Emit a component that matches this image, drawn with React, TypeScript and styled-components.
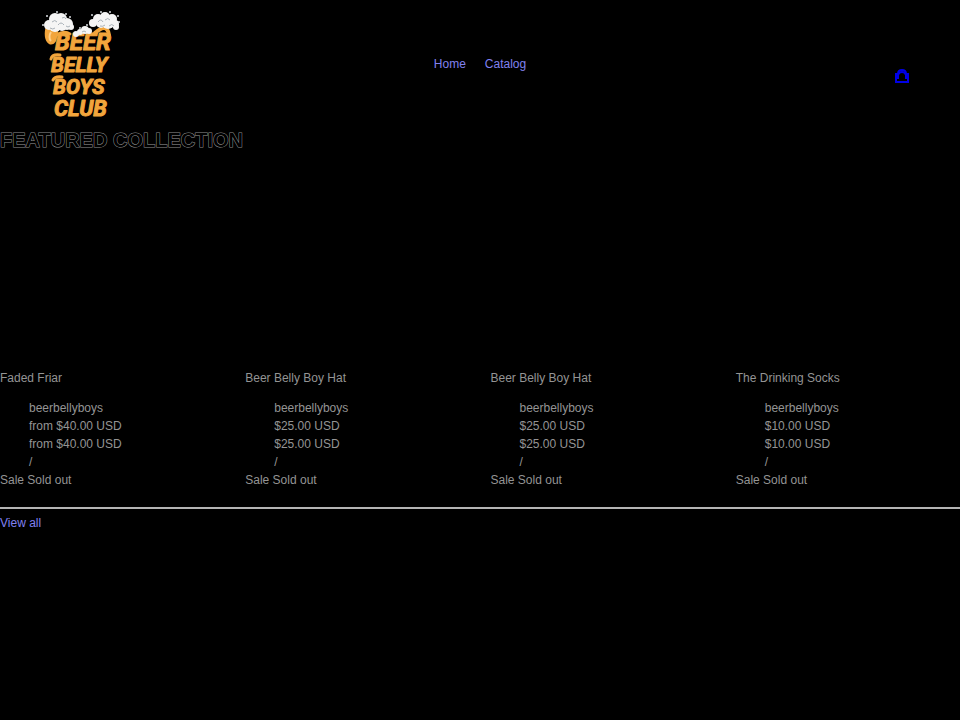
import React from "react";
import styled, { createGlobalStyle } from "styled-components";

const GlobalStyle = createGlobalStyle`
  *, *::before, *::after { box-sizing: border-box; }
  body {
    margin: 0;
    background: #000;
    color: #949494;
    font: 12px/18px "Liberation Sans", Arial, sans-serif;
  }
`;

const Header = styled.header`
  display: grid;
  grid-template-columns: 1fr auto 1fr;
  align-items: center;
  padding: 4px 48px 0 40px;
  height: 128px;
`;

const LogoLink = styled.a`
  display: block;
  width: 84px;
  svg { display: block; }
`;

const Nav = styled.nav`
  display: flex;
  gap: 19px;
  padding: 0 0 4px 8px;
`;

const TextLink = styled.a`
  color: #8080f0;
  text-decoration: none;
`;

const CartLink = styled.a`
  justify-self: end;
  display: block;
  padding-top: 20px;
  color: #0000e6;
  svg { display: block; }
`;

const Heading = styled.h2`
  margin: 0;
  font-size: 20px;
  line-height: 24px;
  font-weight: 700;
  color: #000;
  text-transform: uppercase;
  -webkit-text-stroke: 1px #909090;
  paint-order: stroke fill;
`;

const Products = styled.ul`
  display: grid;
  grid-template-columns: repeat(4, 1fr);
  column-gap: 21px;
  margin: 0;
  padding: 217px 0 0;
  list-style: none;
`;

const Title = styled.h3`
  margin: 0 0 12px;
  font-size: 12px;
  line-height: 18px;
  font-weight: 400;
`;

const Details = styled.div`
  padding-left: 29px;
`;

const Line = styled.p`
  margin: 0;
`;

const Divider = styled.hr`
  margin: 18px 0 5px;
  border: 0;
  height: 2px;
  background: #b4b4b4;
`;

const items = [
  { title: "Faded Friar", price: "from $40.00 USD" },
  { title: "Beer Belly Boy Hat", price: "$25.00 USD" },
  { title: "Beer Belly Boy Hat", price: "$25.00 USD" },
  { title: "The Drinking Socks", price: "$10.00 USD" },
];

const LogoText = styled.text`
  font-family: Roboto, "Liberation Sans", sans-serif;
  font-weight: 700;
  font-style: italic;
  fill: #f2a53c;
  stroke: #f2a53c;
  stroke-width: 1;
  stroke-linejoin: round;
`;

const foam: [number, number, number][] = [
  [9, 17, 5], [15, 11, 6], [21, 11, 6], [27, 16, 6], [15, 18, 6], [22, 18, 5], [31, 19, 3],
  [36, 26, 3], [40, 24, 3], [45, 22, 4], [49, 23, 3],
  [53, 15, 4], [58, 11, 5], [65, 9, 5], [72, 11, 5], [75, 16, 4], [68, 15, 6], [61, 15, 5], [76, 19, 3],
];
const bubbles: [number, number, number][] = [
  [3, 17, 1], [7, 8, 1], [17, 4, 1], [26, 6, 1], [30, 9, 1], [40, 20, 1], [47, 17, 1],
  [52, 7, 1], [61, 4, 1], [70, 4, 1], [78, 8, 1], [79, 14, 1],
];

function Logo() {
  return (
    <svg width="84" height="116" viewBox="0 0 84 116" role="img" aria-label="Beer Belly Boys Club">
      <path d="M6 18C4 24 4 33 9 36C13 38 17 34 17 29L19 20Z" fill="#f2a53c" />
      <path d="M11 24C9 27 9 31 11 33" fill="none" stroke="#ffd08a" strokeWidth="2" />
      <path d="M17 27Q24 22 30 26" fill="none" stroke="#f2a53c" strokeWidth="3" strokeLinecap="round" />
      <path d="M55 25Q67 14 69 27" fill="none" stroke="#f2a53c" strokeWidth="4" strokeLinecap="round" />
      <path d="M11 51Q12 46 20 47M13 72Q15 68 22 69" fill="none" stroke="#f2a53c" strokeWidth="3" strokeLinecap="round" />
      <LogoText x="15" y="42" fontSize="24">BEER</LogoText>
      <LogoText x="11" y="64" fontSize="21">BELLY</LogoText>
      <LogoText x="13" y="86" fontSize="21">BOYS</LogoText>
      <LogoText x="14" y="108" fontSize="22">CLUB</LogoText>
      {foam.map(([x, y, r]) => (
        <circle key={`${x}-${y}`} cx={x} cy={y} r={r} fill="#f5f5f5" />
      ))}
      {bubbles.map(([x, y, r]) => (
        <circle key={`${x}-${y}`} cx={x} cy={y} r={r} fill="#d9dde0" />
      ))}
      <path
        d="M12 14q3-3 5 0M18 17q3-4 6 0M22 10q3-2 4 1M10 20q3 2 5 0M26 18q2 2 4 0M58 14q3-4 5 0M65 12q3-3 5 0M69 18q3-3 5 0M60 18q3 1 5-1M42 24q2-2 4 0"
        fill="none"
        stroke="#a9b1b8"
        strokeWidth="1"
      />
    </svg>
  );
}

export default function App() {
  return (
    <>
      <GlobalStyle />
      <Header>
        <LogoLink href="#">
          <Logo />
        </LogoLink>
        <Nav aria-label="Main">
          <TextLink href="#">Home</TextLink>
          <TextLink href="#catalog">Catalog</TextLink>
        </Nav>
        <CartLink href="#cart" aria-label="Cart">
          <svg width="18" height="18" viewBox="0 0 18 18" fill="none" stroke="currentColor" strokeWidth="2">
            <path d="M2 15V7H4Q4 3 8 3Q12 3 12 7H14V15Z" />
            <path d="M4 12V8Q5 5 8 5Q11 5 12 8V12" />
          </svg>
        </CartLink>
      </Header>
      <main>
        <Heading>Featured collection</Heading>
        <Products>
          {items.map((item, i) => (
            <li key={i}>
              <Title>{item.title}</Title>
              <Details>
                <Line>beerbellyboys</Line>
                <Line>{item.price}</Line>
                <Line>{item.price}</Line>
                <Line>/</Line>
              </Details>
              <Line>Sale Sold out</Line>
            </li>
          ))}
        </Products>
        <Divider />
        <TextLink href="#all">View all</TextLink>
      </main>
    </>
  );
}
